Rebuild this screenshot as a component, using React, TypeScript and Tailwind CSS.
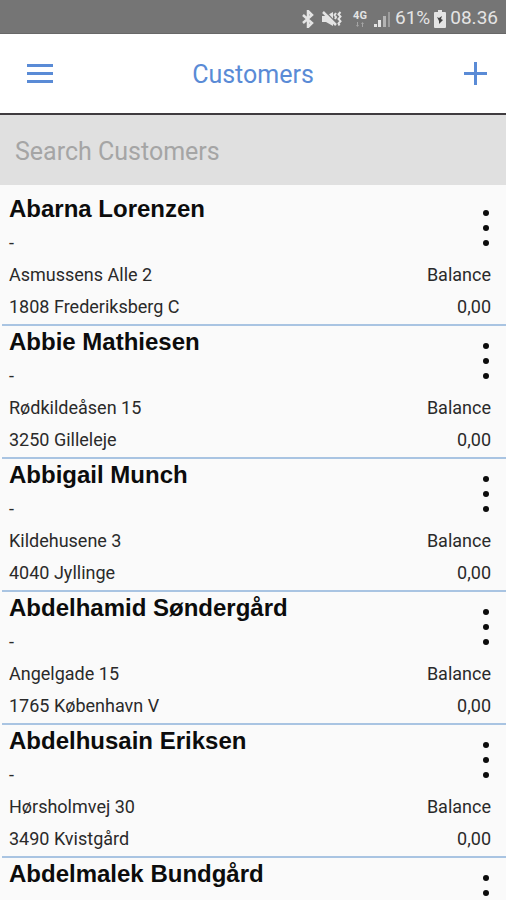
import { useState } from 'react'

interface Customer {
  name: string
  contact?: string
  street?: string
  city?: string
  balance?: string
}

const customers: Customer[] = [
  { name: 'Abarna Lorenzen', contact: '-', street: 'Asmussens Alle 2', city: '1808 Frederiksberg C', balance: '0,00' },
  { name: 'Abbie Mathiesen', contact: '-', street: 'Rødkildeåsen 15', city: '3250 Gilleleje', balance: '0,00' },
  { name: 'Abbigail Munch', contact: '-', street: 'Kildehusene 3', city: '4040 Jyllinge', balance: '0,00' },
  { name: 'Abdelhamid Søndergård', contact: '-', street: 'Angelgade 15', city: '1765 København V', balance: '0,00' },
  { name: 'Abdelhusain Eriksen', contact: '-', street: 'Hørsholmvej 30', city: '3490 Kvistgård', balance: '0,00' },
  { name: 'Abdelmalek Bundgård' },
]

function StatusBar() {
  return (
    <div className="flex h-[34px] shrink-0 items-center justify-end border-b border-[#686868] bg-[#757575] pt-1 pr-2 text-[19px] text-[#e4e4e4]">
      <svg width="12" height="18" viewBox="0 0 12 18" fill="none" stroke="currentColor" strokeWidth="2.500" aria-label="Bluetooth">
        <path d="M1 5l9 8-4 4V1l4 4-9 8" />
      </svg>
      <svg className="ml-2" width="20" height="18" viewBox="0 0 20 18" fill="none" stroke="currentColor" aria-label="Muted, vibrate">
        <path d="M0 6h4l7-4v14l-7-4H0z" fill="currentColor" stroke="none" />
        <path d="M3 1l11 12" stroke="#757575" strokeWidth="1.500" />
        <path d="M1 2l13 13" strokeWidth="2.500" />
        <path d="M14 3l-1.500 2 1.500 2-1 2M18.500 2l-2 2.300 2 2.300-2 2.300 2 2.300-2 2.300 1 2" strokeWidth="2" />
      </svg>
      <div className="ml-2 flex w-5 flex-col items-center justify-center">
        <span className="text-[11px] leading-3 font-bold">4G</span>
        <svg width="8" height="5" viewBox="0 0 8 5" fill="#a5a5a5" aria-hidden="true">
          <path d="M1 0h1v3h1L1.500 5 0 3h1zM6 5h1V2h1L6.500 0 5 2h1z" />
        </svg>
      </div>
      <svg className="ml-1" width="17" height="16" viewBox="0 0 17 16" fill="currentColor" aria-label="Signal strength">
        <rect x="0" y="13" width="3" height="3" />
        <rect x="4" y="9" width="3" height="7" />
        <rect x="9" y="5" width="3" height="11" fill="#b4b4b4" />
        <rect x="14" y="1" width="2" height="15" fill="#9c9c9c" />
      </svg>
      <span className="ml-1">61%</span>
      <svg className="ml-1" width="12" height="18" viewBox="0 0 12 18" aria-label="Battery">
        <path d="M4 0h4v2h3q1 0 1 1v14q0 1-1 1H1q-1 0-1-1V3q0-1 1-1h3z" fill="currentColor" />
        <path d="M3 7l2 1 3-2-1 3 2 1-4 4 0-3z" fill="#444" />
      </svg>
      <span className="ml-1">08.36</span>
    </div>
  )
}

function CustomerRow({ customer }: { customer: Customer }) {
  return (
    <li className="ml-[2px] flex justify-between border-b-2 border-[#a9c4e2] pr-[15px] pb-px pl-[7px]">
      <div className="min-w-0">
        <h2 className="mb-[2px] truncate font-['Liberation_Sans',sans-serif] text-2xl leading-8 font-bold text-[#0c0c0c]">{customer.name}</h2>
        <p className="h-8 leading-8">{customer.contact}</p>
        <p className="h-8 leading-8">{customer.street}</p>
        <p className="h-8 leading-8">{customer.city}</p>
      </div>
      <div className="flex shrink-0 flex-col items-end">
        <button type="button" aria-label={`Options for ${customer.name}`} className="flex h-[66px] items-center justify-end pt-1">
          <svg width="10" height="38" viewBox="0 0 10 38" fill="#0c0c0c">
            <circle cx="5" cy="4" r="3" />
            <circle cx="5" cy="19" r="3" />
            <circle cx="5" cy="34" r="3" />
          </svg>
        </button>
        {customer.balance && (
          <>
            <span className="leading-8">Balance</span>
            <span className="leading-8">{customer.balance}</span>
          </>
        )}
      </div>
    </li>
  )
}

export default function App() {
  const [query, setQuery] = useState('')
  const visible = customers.filter((item) => item.name.toLowerCase().includes(query.toLowerCase()))

  return (
    <div className="flex h-screen flex-col overflow-hidden bg-[#fafafa] font-[Roboto,sans-serif]">
      <StatusBar />
      <header className="flex h-[81px] shrink-0 items-center justify-between border-b-2 border-[#403c40] bg-white px-[18px] text-[#5a8bd6]">
        <button type="button" aria-label="Menu" className="grid size-11 place-items-center">
          <svg width="28" height="20" viewBox="0 0 28 20" fill="currentColor">
            <rect x="1" y="0" width="26" height="3" />
            <rect x="1" y="8" width="26" height="3" />
            <rect x="1" y="16" width="26" height="3" />
          </svg>
        </button>
        <h1 className="pt-0.5 text-[25px] leading-8">Customers</h1>
        <button type="button" aria-label="Add customer" className="flex size-11 items-center justify-end">
          <svg width="26" height="24" viewBox="0 0 26 24" fill="currentColor">
            <rect x="2" y="10" width="23" height="3" />
            <rect x="12" y="0" width="3" height="23" />
          </svg>
        </button>
      </header>
      <div className="shrink-0 bg-[#e0e0e0]">
        <input
          type="search"
          aria-label="Search Customers"
          placeholder="Search Customers"
          value={query}
          onChange={(event) => setQuery(event.target.value)}
          className="h-[70px] w-full appearance-none px-[15px] pt-0.5 text-[25px] text-neutral-700 outline-none placeholder:text-[#a5a5a5]"
        />
      </div>
      <ul className="min-h-0 flex-1 overflow-y-auto pt-2 text-lg text-[#2a2a2a] [scrollbar-width:none]">
        {visible.map((customer) => (
          <CustomerRow key={customer.name} customer={customer} />
        ))}
      </ul>
    </div>
  )
}
